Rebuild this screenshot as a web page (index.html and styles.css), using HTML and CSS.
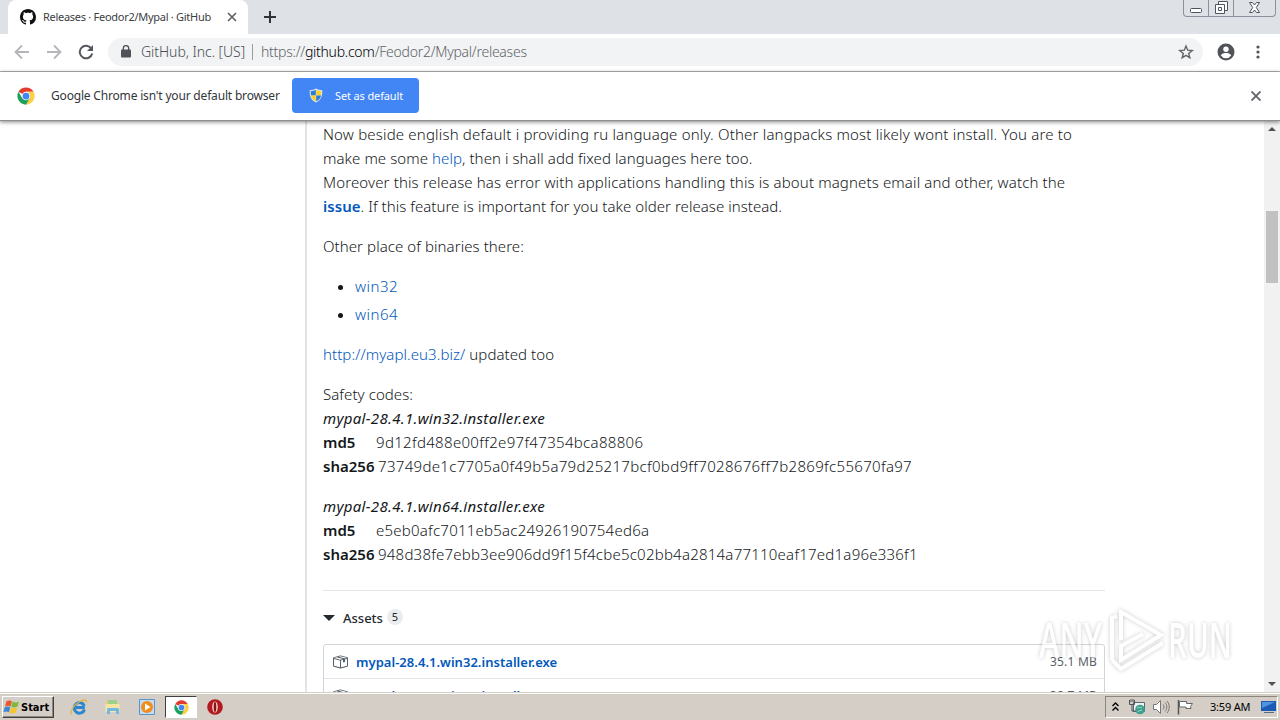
FILE: index.html
```
<!DOCTYPE html>
<html lang="en">
<head>
    <meta charset="UTF-8">
    <meta name="viewport" content="width=device-width, initial-scale=1.0">
    <title>Releases · Feodor2/Mypal · GitHub</title>
    <link rel="stylesheet" href="styles.css">
</head>
<body>
    <svg class="defs" width="0" height="0">
        <symbol id="chrome" viewBox="0 0 48 48">
            <circle cx="24" cy="24" r="23" fill="#fff"/>
            <path fill="#e33b2e" d="M24 24 4.100 12.500A23 23 0 0 1 43.900 12.500H24z"/>
            <path fill="#fcd03f" d="M24 12.500H43.900A23 23 0 0 1 24 47L34 29.700z"/>
            <path fill="#1da05a" d="M4.100 12.500A23 23 0 0 0 24 47L34 29.700 24 24 14 29.700z"/>
            <circle cx="24" cy="24" r="11.500" fill="#f5f5f5"/>
            <circle cx="24" cy="24" r="9" fill="#4285f4"/>
        </symbol>
        <symbol id="package" viewBox="0 0 16 16">
            <path fill="#586069" fill-rule="evenodd" d="M1 4.270v7.470c0 .45.300.840.750.970l6.500 1.730c.160.050.340.050.500 0l6.500-1.730c.450-.130.750-.520.750-.970V4.270c0-.450-.300-.840-.750-.970l-6.500-1.740a1.400 1.400 0 0 0-.500 0L1.750 3.300c-.450.130-.750.520-.750.970zm7 9.090-6-1.590V5l6 1.610v6.750zM2 4l2.500-.670L11 5.060l-2.500.670L2 4zm13 7.770-6 1.590V6.610l2-.550V8.500l2-.530V5.530L15 5v6.770zm-2-7.240L6.500 2.800l2-.530L15 4l-2 .530z"/>
        </symbol>
    </svg>

    <div class="tabstrip">
        <div class="tab">
            <svg class="github" width="16" height="16" viewBox="0 0 16 16"><path fill="#111" fill-rule="evenodd" d="M8 0C3.580 0 0 3.580 0 8c0 3.540 2.290 6.530 5.470 7.590.400.070.550-.170.550-.380 0-.190-.010-.820-.010-1.490-2.010.370-2.530-.490-2.690-.940-.090-.230-.480-.940-.820-1.130-.280-.150-.680-.520-.010-.530.630-.010 1.080.580 1.230.820.720 1.210 1.870.870 2.330.660.070-.520.280-.870.510-1.070-1.780-.200-3.640-.890-3.640-3.950 0-.870.310-1.590.820-2.150-.080-.200-.360-1.020.080-2.120 0 0 .670-.210 2.200.820.640-.180 1.320-.270 2-.270s1.360.090 2 .270c1.530-1.040 2.200-.820 2.200-.820.440 1.100.160 1.920.080 2.120.510.560.820 1.270.820 2.150 0 3.070-1.870 3.750-3.650 3.950.290.250.540.730.540 1.480 0 1.070-.010 1.930-.010 2.200 0 .210.150.460.550.380A8.010 8.010 0 0 0 16 8c0-4.420-3.580-8-8-8z"/></svg>
            <span class="tab-title">Releases · Feodor2/Mypal · GitHub</span>
            <svg class="tab-close" width="10" height="10" viewBox="0 0 10 10"><path d="M1 1l8 8M9 1 1 9" stroke="#5f6368" stroke-width="1.700"/></svg>
        </div>
        <svg class="new-tab" width="12" height="12" viewBox="0 0 12 12"><path d="M6 0v12M0 6h12" stroke="#303338" stroke-width="2"/></svg>
        <div class="window-buttons">
            <span><svg width="13" height="16" viewBox="0 0 13 16"><rect x=".5" y="8.500" width="11" height="4" rx="1" fill="#fff" stroke="#4d5563"/></svg></span>
            <span><svg width="13" height="16" viewBox="0 0 13 16"><path d="M3.500 1.500h9v9h-9z" fill="#fff" stroke="#4d5563"/><path d="M.5 4.500h9v9h-9z" fill="#fff" stroke="#4d5563"/><path d="M3.500 7.500h3v3h-3z" fill="none" stroke="#4d5563"/></svg></span>
            <span><svg width="13" height="16" viewBox="0 0 13 16"><path d="M1.500 2.500h3L6.500 5l2-2.500h3L8.300 7.500l3.200 5h-3l-2-2.500-2 2.500h-3l3.200-5z" fill="#fff" stroke="#4d5563"/></svg></span>
        </div>
    </div>

    <div class="toolbar">
        <svg class="nav" width="16" height="16" viewBox="0 0 16 16"><path d="M15 8H2M8 1.500 1.500 8 8 14.500" fill="none" stroke="#b4b6b9" stroke-width="1.800"/></svg>
        <svg class="nav" width="16" height="16" viewBox="0 0 16 16"><path d="M1 8h13M8 1.500 14.500 8 8 14.500" fill="none" stroke="#b4b6b9" stroke-width="1.800"/></svg>
        <svg class="nav" width="16" height="16" viewBox="0 0 16 16"><path d="M13.300 4.500A6.300 6.300 0 1 0 14.200 9.500" fill="none" stroke="#54575b" stroke-width="2"/><path d="M15 1v6H9z" fill="#54575b"/></svg>
        <div class="omnibox">
            <svg class="lock" width="10" height="13" viewBox="0 0 10 13"><rect x="0" y="4.500" width="10" height="8" rx="1" fill="#4f5357"/><path d="M2.300 5V3.300a2.700 2.700 0 0 1 5.400 0V5" fill="none" stroke="#4f5357" stroke-width="1.400"/></svg>
            <span class="issuer">GitHub, Inc. [US]</span>
            <span class="url">https://<b>github.com</b>/Feodor2/Mypal/releases</span>
            <svg class="star" width="16" height="16" viewBox="0 0 16 16"><path d="m8 2 1.700 4.200 4.500.300-3.500 2.900 1.100 4.400L8 11.400l-3.800 2.400 1.100-4.400-3.500-2.900 4.500-.300z" fill="none" stroke="#5f6368" stroke-width="1.400"/></svg>
        </div>
        <svg class="profile" width="18" height="18" viewBox="0 0 18 18"><circle cx="9" cy="9" r="8.500" fill="#505357"/><circle cx="9" cy="6.300" r="2.700" fill="#fff"/><path d="M3.800 12.500c1-2 3-2.500 5.200-2.500s4.200.500 5.200 2.500A6.300 6.300 0 0 1 9 15.200a6.300 6.300 0 0 1-5.200-2.700z" fill="#fff"/></svg>
        <svg class="menu" width="4" height="14" viewBox="0 0 4 14"><g fill="#505357"><circle cx="2" cy="2" r="1.600"/><circle cx="2" cy="7" r="1.600"/><circle cx="2" cy="12" r="1.600"/></g></svg>
    </div>

    <div class="infobar">
        <svg class="infobar-logo" width="18" height="18"><use href="#chrome"/></svg>
        <span class="infobar-text">Google Chrome isn't your default browser</span>
        <div class="default-btn">
            <svg width="14" height="15" viewBox="0 0 14 15"><path d="M7 .5C5 1.800 3 2.200.7 2.200c-.2 6 1.300 10 6.300 12.300 5-2.300 6.500-6.300 6.300-12.300C11 2.200 9 1.800 7 .5z" fill="#dfe6ea"/><path d="M6.800 1.800C5.200 2.800 3.500 3.200 1.700 3.200L2 7.500h4.800z" fill="#2d7bd6"/><path d="M7.200 1.800c1.600 1 3.300 1.400 5.100 1.400L12 7.500H7.200z" fill="#fad02c"/><path d="M2 7.500h4.800v5.800C4 12 2.500 10.500 2 7.500z" fill="#fad02c"/><path d="M12 7.500H7.200v5.800c2.800-1.300 4.300-2.800 4.800-5.800z" fill="#2d7bd6"/></svg>
            <span>Set as default</span>
        </div>
        <svg class="infobar-close" width="10" height="10" viewBox="0 0 10 10"><path d="M.5.500l9 9M9.500.500l-9 9" stroke="#5f6368" stroke-width="1.800"/></svg>
    </div>

    <div class="viewport">
        <div class="release">
            <div class="markdown">
                <p>
                    <span class="looser">Now beside english default i providing ru language only. Other langpacks most likely wont install. You are to</span><br>
                    make me some <a>help</a>, then i shall add fixed languages here too.<br>
                    <span class="loose">Moreover this release has error with applications handling this is about magnets email and other, watch the</span><br>
                    <span class="tight"><a><strong>issue</strong></a>. If this feature is important for you take older release instead.</span>
                </p>
                <p>Other place of binaries there:</p>
                <ul>
                    <li><a>win32</a></li>
                    <li><a>win64</a></li>
                </ul>
                <p><a>http://myapl.eu3.biz/</a> updated too</p>
                <p>
                    Safety codes:<br>
                    <em>mypal-28.4.1.win32.installer.exe</em><br>
                    <strong class="md5">md5</strong><span class="hash">9d12fd488e00ff2e97f47354bca88806</span><br>
                    <strong class="sha">sha256</strong><span class="hash">73749de1c7705a0f49b5a79d25217bcf0bd9ff7028676ff7b2869fc55670fa97</span>
                </p>
                <p>
                    <em>mypal-28.4.1.win64.installer.exe</em><br>
                    <strong class="md5">md5</strong><span class="hash narrow">e5eb0afc7011eb5ac24926190754ed6a</span><br>
                    <strong class="sha">sha256</strong><span class="hash narrow">948d38fe7ebb3ee906dd9f15f4cbe5c02bb4a2814a77110eaf17ed1a96e336f1</span>
                </p>
            </div>
            <div class="assets-header">
                <span class="caret"></span>
                <span class="assets-label">Assets</span>
                <span class="counter">5</span>
            </div>
            <div class="assets">
                <div class="asset">
                    <svg width="16" height="16"><use href="#package"/></svg>
                    <a>mypal-28.4.1.win32.installer.exe</a>
                    <span class="size">35.1 MB</span>
                </div>
                <div class="asset">
                    <svg width="16" height="16"><use href="#package"/></svg>
                    <a>mypal-28.4.1.win64.installer.exe</a>
                    <span class="size">38.7 MB</span>
                </div>
            </div>
        </div>
        <div class="scrollbar">
            <span class="arrow-up"></span>
            <span class="thumb"></span>
            <span class="arrow-down"></span>
        </div>
    </div>

    <div class="taskbar">
        <div class="start">
            <svg width="18" height="16" viewBox="0 0 18 16"><path d="M3.500 2.300C5.500 1 7.300 1.200 9 2.300L7.500 7.500C6 6.500 4 6.300 2 7.500z" fill="#e8592b"/><path d="M9.700 2.600c2 1.200 4 1.200 6.300-.1L14.500 7.600c-2 1.300-4.200 1.300-6.300.2z" fill="#7fb93c"/><path d="M1.800 8.200c2-1.100 4-1 5.500 0L5.800 13.200c-1.500-1-3.500-1-5.500 0z" fill="#3a87d6"/><path d="M8 8.500c2 1.100 4 1.100 6.300-.1l-1.500 5.200c-2.200 1.200-4.300 1.200-6.300.1z" fill="#f7c52e"/></svg>
            <span>Start</span>
        </div>
        <div class="quick">
            <div class="app"><svg width="18" height="18" viewBox="0 0 18 18"><path d="M14.500 11.500A5.300 5.300 0 1 1 14.300 7.800M4.500 9.500h10.300" fill="none" stroke="#2a86d1" stroke-width="3"/><path d="M2 15.500C-1 17 2 8 9 4c4-2.500 8-3 7.500.5" fill="none" stroke="#e3b63c" stroke-width="1.300"/></svg></div>
            <div class="app"><svg width="18" height="18" viewBox="0 0 18 18"><path d="M2 3h5l1 2h7v9H2z" fill="#e9cd72"/><path d="M4 2h9v4H4z" fill="#9ed08c"/><path d="M1.500 6h14v8h-14z" fill="#f6e5a2"/><path d="M3 16v-4.500c0-1 .7-1.500 1.500-1.500h9c.8 0 1.500.5 1.500 1.500V16h-3v-3H6v3z" fill="#6fb9e2"/></svg></div>
            <div class="app"><svg width="18" height="18" viewBox="0 0 18 18"><path d="M1.500 1.500h15v15h-15z" fill="#c2dcf1" stroke="#5796cc"/><circle cx="9" cy="9" r="6" fill="#f28c1c"/><path d="M7 5.500v7L12.500 9z" fill="#fff"/></svg></div>
            <div class="app active"><svg width="15" height="15"><use href="#chrome"/></svg></div>
            <div class="app"><svg width="18" height="18" viewBox="0 0 18 18"><circle cx="9" cy="9" r="7.800" fill="#b3191e"/><ellipse cx="9" cy="9" rx="2.800" ry="5.500" fill="#f3d5d4"/><ellipse cx="9" cy="9" rx="1.300" ry="5" fill="#8c1014"/></svg></div>
        </div>
        <div class="tray">
            <svg class="chevrons" width="7" height="10" viewBox="0 0 7 10"><path d="M.5 4l3-3 3 3M.5 8.500l3-3 3 3" fill="none" stroke="#000" stroke-width="1.400"/></svg>
            <svg class="network" width="17" height="16" viewBox="0 0 17 16"><path d="M4.500 3.500h11v9h-11z" fill="#eef3f3" stroke="#5c6870"/><path d="M.5 1v4.500h5V1M3 5.500V12h4M2 0v3M4 0v3" fill="none" stroke="#4d5358"/><circle cx="11" cy="10.500" r="4.800" fill="#3d9f8e"/><path d="M8 9c2-2 3 1 5-1M9 13c0-2 3-1 4-2" fill="none" stroke="#a5dccf"/></svg>
            <svg class="sound" width="17" height="16" viewBox="0 0 17 16"><path d="M.5 5.500h3l4-4v13l-4-4h-3z" fill="#fff" stroke="#777"/><path d="M10 5.500c1.300 1.500 1.300 3.500 0 5M12 3.500c2.400 2.500 2.400 6.500 0 9M14 2c3 3.500 3 8.500 0 12" fill="none" stroke="#777"/></svg>
            <svg class="flag" width="17" height="16" viewBox="0 0 17 16"><path d="M1.500 1v14.500" stroke="#555" stroke-width="1.500"/><path d="M2.500 2.500h7v2h6l-2 3 .5 2h-5v-1.500H2.500z" fill="#fff" stroke="#666"/></svg>
            <span class="clock">3:59 AM</span>
            <svg class="desktop" width="16" height="14" viewBox="0 0 16 14"><path d="M0 1h15v10H0z" fill="#1c5bb5"/><path d="M1 2h13L1 8z" fill="#4f94dd"/><path d="M3 12.500h10" stroke="#5b6d85"/></svg>
        </div>
    </div>

    <!-- recording watermark -->
    <svg class="watermark" width="210" height="80" viewBox="0 0 210 80">
        <text x="9" y="58" textLength="63" lengthAdjust="spacingAndGlyphs">ANY</text>
        <text x="138" y="58" textLength="64" lengthAdjust="spacingAndGlyphs">RUN</text>
        <path d="M82 60V18l5-2M91 40V12l40 23-40 25V46l22-12M82 60l9 9 42-26"/>
    </svg>
</body>
</html>
```
FILE: styles.css
```
* {
    box-sizing: border-box;
}
body {
    margin: 0;
    width: 1280px;
    height: 720px;
    overflow: hidden;
    display: flex;
    flex-direction: column;
    background: #fff;
    font-family: "Noto Sans", sans-serif;
    font-weight: 300;
    color: #24292e;
    white-space: nowrap;
}
svg {
    display: block;
    flex: none;
}
.defs {
    position: absolute;
}

/* tab strip */
.tabstrip {
    height: 34px;
    flex: none;
    display: flex;
    background: #dee1e6;
    padding-left: 8px;
}
.tab {
    width: 240px;
    height: 34px;
    display: flex;
    align-items: center;
    padding-left: 12px;
    background: #fff;
    border-radius: 8px 8px 0 0;
}
.tab-title {
    width: 168px;
    margin: 0 16px 1px 7px;
    font-size: 11px;
    font-weight: 400;
    letter-spacing: -0.28px;
    color: #3c4043;
}
.new-tab {
    margin: 11px 0 0 16px;
}
.window-buttons {
    display: flex;
    margin: 0 4px 0 auto;
    height: 17px;
    border: 1px solid #8b919d;
    border-top: none;
    border-radius: 0 0 4px 4px;
}
.window-buttons span {
    width: 25px;
    display: flex;
    justify-content: center;
    border-right: 1px solid #8b919d;
}
.window-buttons span:last-child {
    width: 41px;
    border-right: none;
}

/* toolbar */
.toolbar {
    height: 38px;
    flex: none;
    display: flex;
    align-items: center;
    padding: 0 20px 2px 14px;
    border-bottom: 1px solid #b0b1b3;
}
.nav {
    margin-right: 16px;
}
.omnibox {
    width: 1095px;
    height: 28px;
    display: flex;
    align-items: center;
    padding: 0 9px 0 13px;
    margin-left: -2px;
    border-radius: 14px;
    background: #f1f3f4;
    font-size: 14px;
    color: #4a4e52;
}
.issuer {
    width: 112px;
    margin-left: 10px;
    border-right: 1px solid #9a9da0;
    letter-spacing: -0.05px;
    line-height: 16px;
}
.url {
    padding-left: 8px;
    letter-spacing: -0.26px;
    color: #5f6368;
}
.url b {
    font-weight: 300;
    color: #000;
}
.star {
    margin-left: auto;
}
.profile {
    margin-left: 14px;
}
.menu {
    margin-left: auto;
}

/* default browser prompt */
.infobar {
    height: 49px;
    flex: none;
    display: flex;
    align-items: center;
    padding: 0 19px 1px 17px;
    background: #fff;
    border-bottom: 1px solid #8e8e8e;
    box-shadow: 0 1px 4px rgba(0, 0, 0, 0.5);
    z-index: 1;
}
.infobar-text {
    width: 229px;
    margin: 0 12px 0 16px;
    font-size: 12px;
    font-weight: 400;
    letter-spacing: -0.18px;
    color: #33363a;
}
.default-btn {
    width: 127px;
    height: 35px;
    display: flex;
    align-items: center;
    padding-left: 17px;
    gap: 12px;
    border-radius: 4px;
    background: #4285f4;
    color: #fff;
    font-size: 11px;
    font-weight: 400;
    letter-spacing: -0.13px;
}
.infobar-close {
    margin-left: auto;
}

/* page */
.viewport {
    flex: 1;
    display: flex;
    overflow: hidden;
}
.release {
    width: 800px;
    margin-left: 305px;
    padding: 1px 0 0 16px;
    border-left: 2px solid #e1e4e8;
}
.markdown {
    padding-bottom: 24px;
    border-bottom: 1px solid #e1e4e8;
    font-size: 15px;
    line-height: 24px;
    letter-spacing: 0.07px;
    color: #14171a;
}
.markdown p,
.markdown ul {
    margin: 0 0 16px;
}
.markdown p:last-child {
    margin-bottom: 0;
}
.markdown ul {
    padding-left: 32px;
    letter-spacing: 0.5px;
}
.markdown li + li {
    margin-top: 4px;
}
.markdown em {
    font-weight: 400;
    letter-spacing: 0.32px;
}
.looser {
    letter-spacing: 0.178px;
}
.loose {
    letter-spacing: 0.13px;
}
.tight {
    letter-spacing: 0.04px;
}
.hash {
    letter-spacing: 0.32px;
}
.hash.narrow {
    letter-spacing: 0.23px;
}
a {
    color: #0358bb;
    text-decoration: none;
}
strong {
    font-weight: 600;
}
.md5,
.sha {
    display: inline-block;
    width: 53px;
    letter-spacing: 0;
}
.sha {
    width: 55px;
}
.assets-header {
    display: flex;
    align-items: center;
    height: 53px;
    font-size: 14px;
}
.caret {
    border: 6px solid transparent;
    border-top-color: #24292e;
    border-bottom: none;
}
.assets-label {
    font-size: 13px;
    font-weight: 500;
    margin: 0 4px 0 8px;
}
.counter {
    width: 16px;
    height: 16px;
    border-radius: 8px;
    background: #eaecee;
    font-size: 11px;
    font-weight: 400;
    line-height: 16px;
    text-align: center;
    margin-bottom: 2px;
}
.assets {
    border: 1px solid #d1d5da;
    border-radius: 3px 3px 0 0;
    font-size: 13px;
}
.asset {
    display: flex;
    align-items: center;
    height: 34px;
    padding: 0 7px 0 8px;
    border-bottom: 1px solid #e1e4e8;
}
.asset a {
    margin-left: 8px;
    font-weight: 600;
    letter-spacing: 0.03px;
}
.size {
    margin-left: auto;
    color: #586069;
    font-size: 12px;
    font-weight: 400;
    letter-spacing: 0.2px;
}
.scrollbar {
    width: 16px;
    margin-left: auto;
    padding: 6px 2px;
    display: flex;
    flex-direction: column;
    align-items: center;
    background: #f1f1f1;
}
.arrow-up,
.arrow-down {
    border: 4px solid transparent;
}
.arrow-up {
    border-top: none;
    border-bottom-color: #505050;
}
.arrow-down {
    margin-top: auto;
    border-bottom: none;
    border-top-color: #505050;
}
.thumb {
    width: 12px;
    height: 72px;
    margin-top: 80px;
    background: #c1c1c1;
}

/* taskbar */
.taskbar {
    height: 28px;
    flex: none;
    display: flex;
    align-items: center;
    border-top: 1px solid #d4d0c8;
    box-shadow: inset 0 1px #fff;
    background: #d5cec7;
    color: #000;
    padding: 1px 2px 0;
}
.start {
    width: 52px;
    height: 22px;
    display: flex;
    align-items: center;
    border: 1px solid;
    border-color: #fff #404040 #404040 #fff;
    box-shadow: inset -1px -1px #8d8882;
    font-family: "DejaVu Sans Condensed", sans-serif;
    font-size: 11px;
    font-weight: 700;
}
.quick {
    display: flex;
    margin-left: 9px;
    gap: 2px;
}
.app {
    width: 32px;
    height: 22px;
    display: flex;
    align-items: center;
    justify-content: center;
}
.active {
    background: #fff;
    border: 1px solid;
    border-color: #404040 #fff #fff #404040;
}
.tray {
    width: 173px;
    height: 22px;
    margin-left: auto;
    display: flex;
    align-items: center;
    border: 1px solid;
    border-color: #8b857e #fff #fff #8b857e;
    padding-left: 6px;
    font-size: 11px;
    font-weight: 400;
}
.network {
    margin-left: 10px;
}
.sound,
.flag {
    margin-left: 7px;
}
.clock {
    margin-left: 16px;
    padding-bottom: 1px;
    letter-spacing: -0.2px;
}
.desktop {
    margin-left: auto;
}

.watermark {
    position: absolute;
    left: 1030px;
    top: 600px;
    z-index: 2;
    fill: #fff;
    font-family: "Open Sans", sans-serif;
    font-size: 48px;
    font-weight: 600;
    opacity: 0.6;
    filter: drop-shadow(0 0 2px rgba(0, 0, 0, 0.35));
}
.watermark path {
    fill: none;
    stroke: #fff;
    stroke-width: 4;
}
```
